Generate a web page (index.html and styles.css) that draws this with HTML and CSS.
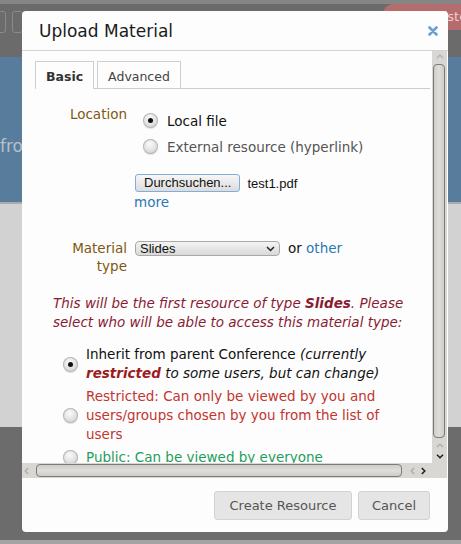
FILE: index.html
```html
<!DOCTYPE html>
<html>
<head>
<meta charset="utf-8">
<link rel="stylesheet" href="styles.css">
</head>
<body>
<div class="page">
  <div class="chrome-top"></div>
  <div class="toolbar">
    <span class="tbtn first"></span>
    <span class="tbtn"></span>
    <div class="reg">Register</div>
  </div>
  <div class="band-blue"><span class="ghost">from</span></div>
  <div class="band-light"></div>
  <div class="band-dark"></div>
  <div class="band-foot"></div>
</div>

<div class="dialog">
  <div class="dlg-head">
    <h1 class="dlg-title">Upload Material</h1>
    <svg class="close" width="10" height="10" viewBox="0 0 10 10"><path d="M1.5 1.5 L8.5 8.5 M8.5 1.5 L1.5 8.5" stroke="#6a9fd3" stroke-width="2.6" stroke-linecap="round"/></svg>
  </div>
  <div class="dlg-scroll">
    <div class="viewport">
      <div class="content">
        <div class="tabs">
          <div class="tab active">Basic</div>
          <div class="tab">Advanced</div>
        </div>

        <div class="row row-loc">
          <div class="lbl">Location</div>
          <div class="val">
            <div class="opt first"><span class="radio on"></span><span class="opt-dark">Local file</span></div>
            <div class="opt second"><span class="radio"></span><span class="opt-grey">External resource (hyperlink)</span></div>
          </div>
        </div>

        <div class="file-row">
          <span class="file-btn">Durchsuchen...</span>
          <span class="file-name">test1.pdf</span>
        </div>
        <a class="more">more</a>

        <div class="row row-type">
          <div class="lbl lbl-type">Material type</div>
          <div class="val val-type">
            <span class="select">Slides<svg class="sel-chev" width="9" height="6" viewBox="0 0 9 6"><path d="M1 1 L4.5 4.5 L8 1" fill="none" stroke="#222" stroke-width="1.5"/></svg></span>
            <span class="or">or <a class="link">other</a></span>
          </div>
        </div>

        <p class="warn">This will be the first resource of type <b>Slides</b>. Please select who will be able to access this material type:</p>

        <div class="access">
          <div class="acc"><span class="radio on"></span><span class="acc-text inherit">Inherit from parent Conference <i>(currently <b>restricted</b> to some users, but can change)</i></span></div>
          <div class="acc"><span class="radio"></span><span class="acc-text restricted">Restricted: Can only be viewed by you and users/groups chosen by you from the list of users</span></div>
          <div class="acc acc-last"><span class="radio"></span><span class="acc-text public">Public: Can be viewed by everyone</span></div>
        </div>
      </div>
    </div>
    <div class="vbar">
      <div class="arrow-v top"><svg width="8" height="5" viewBox="0 0 8 5"><path d="M1 4.2 L4 1.2 L7 4.2" fill="none" stroke="#a9a9a9" stroke-width="1.2"/></svg></div>
      <div class="thumb-v"></div>
      <div class="arrow-v up2"><svg width="8" height="5" viewBox="0 0 8 5"><path d="M1 4.2 L4 1.2 L7 4.2" fill="none" stroke="#a9a9a9" stroke-width="1.2"/></svg></div>
      <div class="arrow-v down"><svg width="8" height="5" viewBox="0 0 8 5"><path d="M1 0.8 L4 3.8 L7 0.8" fill="none" stroke="#1e1e1e" stroke-width="1.5"/></svg></div>
    </div>
    <div class="hbar">
      <div class="arrow-h left"><svg width="5" height="8" viewBox="0 0 5 8"><path d="M4.2 1 L1.2 4 L4.2 7" fill="none" stroke="#a9a9a9" stroke-width="1.2"/></svg></div>
      <div class="thumb-h"></div>
      <div class="arrow-h pair">
        <svg width="5" height="8" viewBox="0 0 5 8"><path d="M4.2 1 L1.2 4 L4.2 7" fill="none" stroke="#a9a9a9" stroke-width="1.2"/></svg>
        <svg width="5" height="8" viewBox="0 0 5 8"><path d="M0.8 1 L3.8 4 L0.8 7" fill="none" stroke="#1e1e1e" stroke-width="1.5"/></svg>
      </div>
    </div>
    <div class="corner"></div>
  </div>
  <div class="dlg-foot">
    <button class="btn btn-wide">Create Resource</button>
    <button class="btn">Cancel</button>
  </div>
</div>
</body>
</html>
```

FILE: styles.css
```css
* { box-sizing: border-box; }
html, body { margin: 0; padding: 0; }
body {
  width: 461px;
  height: 544px;
  overflow: hidden;
  font-family: "DejaVu Sans", Verdana, sans-serif;
  font-size: 13.5px;
  position: relative;
}

/* ---------- backdrop ---------- */
.page { display: flex; flex-direction: column; height: 544px; }
.chrome-top { height: 4px; background: #868686; flex: none; }
.toolbar {
  height: 53px; flex: none;
  background: #6b6b6b;
  display: flex; align-items: flex-start;
}
.tbtn {
  margin-top: 7px;
  width: 11px; height: 22px;
  border: 1px solid #8a8a8a; border-radius: 3px;
}
.tbtn.first { margin-left: -5px; margin-right: 6px; }
.reg {
  margin-left: auto;
  width: 78px; height: 26px;
  background: #b46c6c;
  border-top-left-radius: 10px;
  color: #f2caca;
  font-size: 13px;
  padding-left: 36px;
  line-height: 26px;
  white-space: nowrap; overflow: hidden;
}
.band-blue {
  height: 147px; flex: none;
  background: #587c9b;
  padding-top: 79px;
  border-bottom: 2px solid #a9abad;
}
.ghost { color: #b4c0cc; font-size: 17px; }
.band-light { height: 223px; flex: none; background: #d2d2d2; }
.band-dark { height: 113px; flex: none; background: #6c6c6c; }
.band-foot { flex: 1; background: #a3a3a3; }

/* ---------- dialog ---------- */
.dialog {
  position: absolute;
  left: 22px; top: 11px;
  width: 426px; height: 521px;
  background: #fdfdfd;
  border-radius: 4px;
  display: flex; flex-direction: column;
  overflow: hidden;
}
.dlg-head {
  height: 40px; flex: none;
  border-bottom: 1px solid #d3d3d3;
  display: flex; align-items: center; justify-content: space-between;
  padding: 0 10px 0 17px;
}
.dlg-title { margin: 0; font-size: 17px; font-weight: normal; color: #1b1b1b; }
.close { margin-top: 1px; }

.dlg-scroll {
  height: 427px; flex: none;
  display: grid;
  grid-template-columns: 410px 15px;
  grid-template-rows: 412px 15px;
}
.viewport { overflow: hidden; }
.content { padding: 10px 0 0 13px; width: 427px; }

/* tabs */
.tabs {
  display: flex; gap: 3px;
  border-bottom: 1px solid #cccccc;
  width: 395px;
}
.tab {
  height: 28px;
  margin-bottom: -1px;
  border: 1px solid #cfcfcf; border-bottom: 0;
  padding: 3px 10px 0;
  line-height: 24px;
  font-size: 12.5px;
  color: #444;
}
.tab.active { background: #fdfdfd; font-weight: bold; color: #333; }

/* form rows */
.row { display: flex; }
.lbl { width: 92px; text-align: right; line-height: 19px; color: #7f5810; flex: none; }
.val { margin-left: 8px; }
.row-loc { margin-top: 16px; }
.opt { display: flex; align-items: center; height: 19px; margin-left: 8px; }
.opt.first { margin-top: 6px; }
.opt.second { margin-top: 7px; }
.opt .radio { margin-right: 9px; }
.opt-dark { color: #111; }
.opt-grey { color: #555; }

.radio {
  flex: none;
  width: 15px; height: 15px;
  border-radius: 50%;
  background: radial-gradient(circle at 45% 35%, #fbfbfb 0%, #e4e4e4 45%, #c4c4c4 100%);
  box-shadow: inset 0 0 0 1px #b8b8b8, 0 1px 1px rgba(0,0,0,0.12);
  display: grid; place-items: center;
}
.radio.on::after {
  content: "";
  width: 5px; height: 5px; border-radius: 50%;
  background: #111;
}

.file-row {
  margin-top: 18px; margin-left: 100px;
  display: flex; align-items: center; height: 18px;
}
.file-btn {
  height: 18px;
  padding: 0 8px;
  border: 1px solid #7faedd; border-radius: 3px;
  background: linear-gradient(#f6f6f6, #dcdcdc);
  font-family: "Liberation Sans", Arial, sans-serif; font-size: 13px;
  line-height: 16px; color: #111;
}
.file-name { margin-left: 7px; font-family: "Liberation Sans", Arial, sans-serif; font-size: 13px; color: #111; }
.more { display: block; margin: 1px 0 0 99px; line-height: 19px; color: #2a78b6; }

.row-type { margin-top: 27px; }
.lbl-type { line-height: 18px; padding-left: 34px; }
.val-type { display: flex; align-items: flex-start; }
.select {
  margin-top: 2px;
  width: 145px; height: 15px;
  border: 1px solid #a8a8a8; border-radius: 4px;
  background: linear-gradient(#f4f4f4, #d9d9d9);
  font-family: "Liberation Sans", Arial, sans-serif; font-size: 13px;
  line-height: 13px; color: #111;
  padding-left: 4px;
  display: flex; align-items: center; justify-content: space-between;
  padding-right: 4px;
}
.sel-chev { margin-top: 1px; }
.or { margin-left: 8px; line-height: 18px; color: #111; }
.link { color: #2a78b6; }

.warn {
  margin: 19px 0 0 18px;
  width: 360px;
  font-style: italic; line-height: 19px;
  color: #8a1a33;
}
.warn b { font-weight: bold; }

.access { margin-top: 13px; }
.acc { display: flex; align-items: center; margin-left: 28px; margin-bottom: 4px; }
.acc-last { margin-top: 1px; }
.acc .radio { margin-right: 8px; }
.acc-text { width: 320px; line-height: 19px; }
.inherit { color: #111; }
.inherit b { color: #9c1c1e; }
.restricted { color: #c3352e; }
.public { color: #1f9d5c; }

/* fake scrollbars */
.vbar { background: #d9d7d4; display: flex; flex-direction: column; align-items: center; }
.arrow-v { display: flex; justify-content: center; width: 100%; }
.arrow-v.top { height: 13px; padding-top: 3px; }
.thumb-v {
  width: 12px; height: 374px;
  margin-left: -1px;
  border: 1px solid #7d7b79; border-radius: 4px;
  background: linear-gradient(90deg, #cfcdca, #e0deda 50%, #cfcdca);
}
.arrow-v.up2 { height: 12px; padding-top: 5px; }
.arrow-v.down { height: 13px; padding-top: 4px; }

.hbar { background: #d9d7d4; display: flex; align-items: center; }
.arrow-h.left { width: 14px; display: flex; padding-left: 2px; }
.thumb-h {
  width: 366px; height: 13px;
  border: 1px solid #7d7b79; border-radius: 4px;
  background: linear-gradient(#cfcdca, #e0deda 50%, #cfcdca);
}
.arrow-h.pair { display: flex; gap: 6px; margin-left: 8px; }
.corner { background: #d9d7d4; }

/* footer */
.dlg-foot {
  flex: 1;
  display: flex; justify-content: flex-end; align-items: flex-start;
  gap: 6px;
  padding: 13px 18px 0 0;
}
.btn {
  height: 29px;
  padding: 0 13px;
  border: 1px solid #d2d2d2; border-radius: 3px;
  background: #e5e5e5;
  font-family: "DejaVu Sans", Verdana, sans-serif; font-size: 13px;
  color: #555;
}
.btn-wide { padding: 0 14.5px; }
```
